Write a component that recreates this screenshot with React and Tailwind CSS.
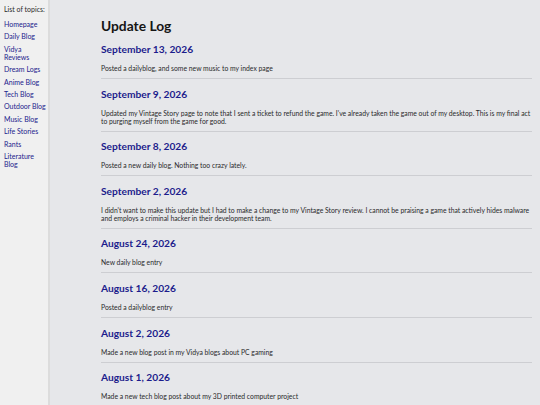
const topics = [
  "Homepage",
  "Daily Blog",
  "Vidya Reviews",
  "Dream Logs",
  "Anime Blog",
  "Tech Blog",
  "Outdoor Blog",
  "Music Blog",
  "Life Stories",
  "Rants",
  "Literature Blog",
];

const entries = [
  {
    date: "September 13, 2026",
    text: "Posted a dailyblog, and some new music to my index page",
  },
  {
    date: "September 9, 2026",
    text: "Updated my Vintage Story page to note that I sent a ticket to refund the game. I've already taken the game out of my desktop. This is my final act to purging myself from the game for good.",
  },
  {
    date: "September 8, 2026",
    text: "Posted a new daily blog. Nothing too crazy lately.",
  },
  {
    date: "September 2, 2026",
    text: "I didn't want to make this update but I had to make a change to my Vintage Story review. I cannot be praising a game that actively hides malware and employs a criminal hacker in their development team.",
  },
  { date: "August 24, 2026", text: "New daily blog entry" },
  { date: "August 16, 2026", text: "Posted a dailyblog entry" },
  {
    date: "August 2, 2026",
    text: "Made a new blog post in my Vidya blogs about PC gaming",
  },
  {
    date: "August 1, 2026",
    text: "Made a new tech blog post about my 3D printed computer project",
  },
];

export default function App() {
  return (
    <div className="flex min-h-[405px] h-[405px] overflow-hidden bg-[#e6e7ea] font-['Lato','Noto_Sans',sans-serif]">
      {/* Sidebar */}
      <aside className="w-[50px] shrink-0 bg-[#f0f0f0] border-r-2 border-[#dcdcdc] pl-[4px] pt-[5px]">
        <p className="text-[7px] leading-[8px] text-[#2a2a2a]">List of topics:</p>
        <ul className="mt-[7px] flex flex-col gap-[4.4px]">
          {topics.map((t) => (
            <li key={t}>
              <a className="block text-[7px] leading-[8px] text-[#22228c]" href="#">
                {t}
              </a>
            </li>
          ))}
        </ul>
      </aside>

      {/* Main */}
      <main className="flex-1 pl-[51px] pr-[8px] pt-[17px]">
        <h1 className="text-[13.8px] leading-[18px] font-bold text-[#151515]">Update Log</h1>
        <div className="mt-[7px]">
          {entries.map((e, i) => (
            <section key={i} className={i > 0 ? "mt-[7.6px]" : ""}>
              <h2 className="text-[10.2px] leading-[14px] font-bold text-[#1c1c8c]">{e.date}</h2>
              <p className="mt-[8px] text-[6.8px] leading-[8px] text-[#2a2a2a]">{e.text}</p>
              <hr className="mt-[6px] border-0 border-t border-[#cdced2]" />
            </section>
          ))}
        </div>
      </main>
    </div>
  );
}
